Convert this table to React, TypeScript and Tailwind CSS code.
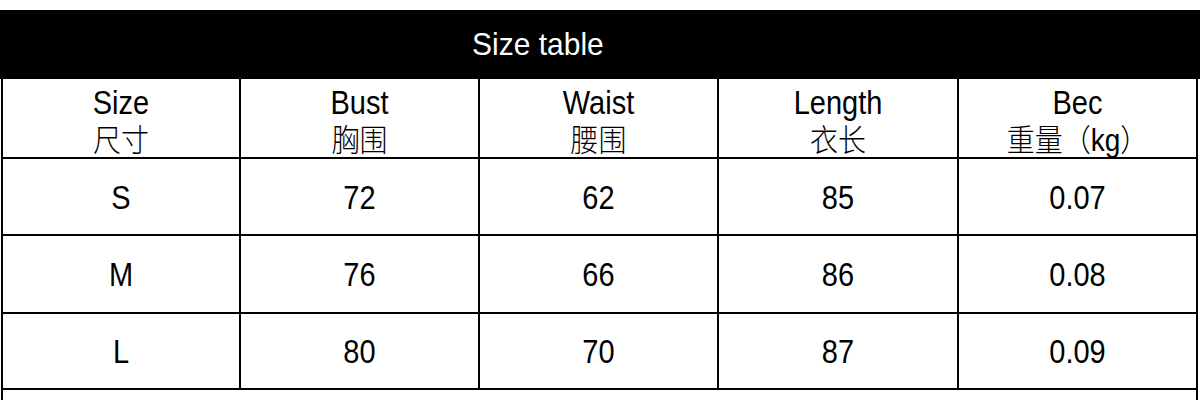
import React from "react";

const font = { fontFamily: '"Liberation Sans", Arial, "Noto Sans CJK SC", sans-serif' };

const headers: [string, string][] = [
  ["Size", "尺寸"],
  ["Bust", "胸围"],
  ["Waist", "腰围"],
  ["Length", "衣长"],
  ["Bec", "重量（kg）"],
];

const rows: string[][] = [
  ["S", "72", "62", "85", "0.07"],
  ["M", "76", "66", "86", "0.08"],
  ["L", "80", "70", "87", "0.09"],
];

const rowHeights = ["h-[77px]", "h-[78px]", "h-[76px]"];

export default function App() {
  return (
    <div className="w-[1200px] h-[400px] overflow-hidden bg-white pt-[10px] text-black" style={font}>
      <div className="h-[69px] bg-black flex items-center">
        <span className="pl-[472px] text-[30px] text-white leading-none scale-y-[1.04]">Size table</span>
      </div>
      <div className="ml-[1px] w-[1197px] border-l-2 border-r-2 border-black">
        <div className="grid grid-cols-[238px_239px_239px_240px_1fr] h-[80px] border-b-2 border-black">
          {headers.map(([en, zh], i) => (
            <div
              key={en}
              className={`flex flex-col items-center justify-center pt-[5px] text-[29px] leading-[38px] ${
                i < 4 ? "border-r-2 border-black" : ""
              }`}
            >
              <span className="scale-y-[1.12]">{en}</span>
              <span className="text-[28px] font-light scale-y-[1.1]">{zh}</span>
            </div>
          ))}
        </div>
        {rows.map((r, ri) => (
          <div
            key={r[0]}
            className={`grid grid-cols-[238px_239px_239px_240px_1fr] ${rowHeights[ri]} border-b-2 border-black`}
          >
            {r.map((c, i) => (
              <div
                key={i}
                className={`flex items-center justify-center pt-[3px] text-[29px] leading-none ${
                  i < 4 ? "border-r-2 border-black" : ""
                }`}
              >
                <span className="scale-y-[1.12]">{c}</span>
              </div>
            ))}
          </div>
        ))}
        <div className="h-[20px]" />
      </div>
    </div>
  );
}
